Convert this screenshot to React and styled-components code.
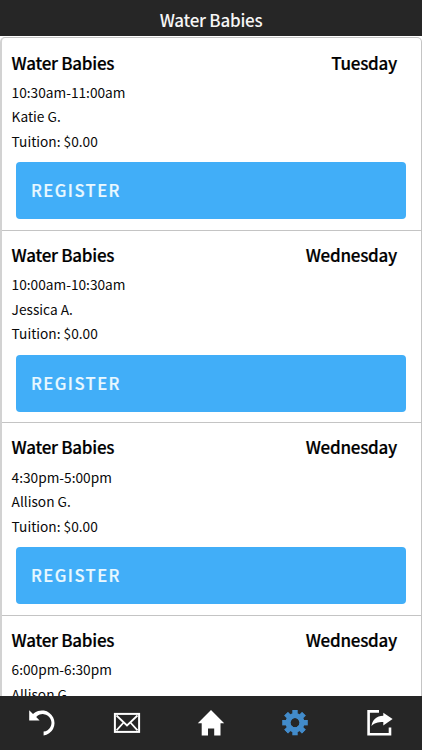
import React from "react";
import styled, { createGlobalStyle } from "styled-components";

const GlobalStyle = createGlobalStyle`
  *, *::before, *::after { box-sizing: border-box; }
  html, body { margin: 0; padding: 0; overflow: hidden; }
  body {
    background: #fff;
    color: #0a0a0a;
    font-family: "Noto Sans CJK SC", "Noto Sans", sans-serif;
  }
`;

const Screen = styled.div`
  width: 100%;
  height: 100vh;
  display: flex;
  flex-direction: column;
  overflow: hidden;
`;

const Header = styled.header`
  flex: 0 0 36px;
  background: #262626;
  display: flex;
  justify-content: center;
`;

const Title = styled.h1`
  margin: 0;
  padding-top: 4px;
  color: #f6f6f6;
  font-size: 17px;
  letter-spacing: -0.26px;
  line-height: 32px;
  font-weight: 500;
`;

const Content = styled.main`
  flex: 1 1 0;
  min-height: 0;
  padding-top: 1px;
  overflow: hidden;
`;

const ClassList = styled.ul`
  list-style: none;
  margin: 0;
  padding: 0.6px 0 0;
  border: 1px solid #c4c4c4;
  border-left-width: 2px;
  border-left-color: #d2d2d2;
  border-radius: 5px 5px 0 0;
`;

const ClassItem = styled.li`
  height: 192.45px;
  padding: 10.95px 15px 0 9.6px;
  border-bottom: 1px solid #c4c4c4;
`;

const ItemHeading = styled.div`
  display: flex;
  justify-content: space-between;
  padding-right: 9px;
  font-size: 17px;
  letter-spacing: -0.26px;
  line-height: 26px;
  font-weight: 500;
  -webkit-text-stroke: 0.2px currentColor;
  color: #000;
`;

const Details = styled.div`
  padding-top: 4.3px;
  font-size: 13.7px;
  line-height: 24.4px;
`;

const RegisterButton = styled.button`
  display: block;
  width: 390px;
  height: 57px;
  margin: 9.2px 0 0 4.4px;
  padding: 0 15px;
  border: 0;
  border-radius: 4px;
  background: #41aef8;
  color: #e9f8ff;
  font: 500 16.6px/56px "Noto Sans CJK SC", "Noto Sans", sans-serif;
  letter-spacing: 1.45px;
  -webkit-text-stroke: 0.2px currentColor;
  text-align: left;
`;

const ButtonLabel = styled.span`
  display: block;
  height: 57px;
`;

const TabBar = styled.nav`
  flex: 0 0 54px;
  background: #262626;
  display: grid;
  grid-template-columns: repeat(5, 1fr);
`;

const Tab = styled.button`
  border: 0;
  padding: 0;
  background: none;
  color: ${(p) => (p.$active ? "#428bca" : "#fff")};
  display: flex;
  align-items: center;
  justify-content: center;
`;

const Icon = styled.svg.attrs({ viewBox: "0 0 28 28", "aria-hidden": true })`
  width: 28px;
  height: 28px;
  display: block;
`;

const UndoIcon = () => (
  <Icon>
    <path d="M1.2 1.3V11.5H11.6L8.2 7.9A8.8 8.8 0 1 1 15.6 22.6V26.5A12.6 12.6 0 1 0 5 5.1Z" fill="currentColor" />
  </Icon>
);

const MailIcon = () => (
  <Icon fill="none" stroke="currentColor">
    <rect x="1.9" y="4.9" width="24.2" height="18" strokeWidth="2" />
    <path d="M3.5 6.5L14 16.5L24.5 6.5M3.5 21.3L10.6 13.5M24.5 21.3L17.4 13.5" strokeWidth="1.8" />
  </Icon>
);

const HomeIcon = () => (
  <Icon>
    <path d="M14 1L27.2 14.2H23.5V26.6H17.2V19.4H11V26.6H4.7V14.2H.8Z" fill="currentColor" />
  </Icon>
);

const GearIcon = () => (
  <Icon>
    <g transform="translate(14 13.7)" fill="currentColor">
      {[0, 45, 90, 135].map((angle) => (
        <rect key={angle} x="-2.7" y="-12.8" width="5.4" height="25.6" transform={`rotate(${angle})`} clipPath="url(#gear-ring)" />
      ))}
    </g>
    <clipPath id="gear-ring">
      <path clipRule="evenodd" d="M-13-13H13V13H-13ZM-4.6 0A4.6 4.6 0 0 0 4.6 0A4.6 4.6 0 0 0-4.6 0Z" />
    </clipPath>
    <circle cx="14" cy="13.7" r="7.1" fill="none" stroke="currentColor" strokeWidth="5" />
  </Icon>
);

const ShareIcon = () => (
  <Icon>
    <path d="M13 2.4H2.6V25.2H24V18.5" fill="none" stroke="currentColor" strokeWidth="2.6" />
    <path d="M17.3 3.8L26.6 9.9L17.3 16.5V13C11.8 13 7.8 14 5.5 17.2C6.1 11 10.5 7 17.3 6.8Z" fill="currentColor" />
  </Icon>
);

const classes = [
  { day: "Tuesday", time: "10:30am-11:00am", teacher: "Katie G." },
  { day: "Wednesday", time: "10:00am-10:30am", teacher: "Jessica A." },
  { day: "Wednesday", time: "4:30pm-5:00pm", teacher: "Allison G." },
  { day: "Wednesday", time: "6:00pm-6:30pm", teacher: "Allison G." },
];

const tabs = [
  { label: "Back", Glyph: UndoIcon },
  { label: "Messages", Glyph: MailIcon },
  { label: "Home", Glyph: HomeIcon },
  { label: "Settings", Glyph: GearIcon, active: true },
  { label: "Share", Glyph: ShareIcon },
];

export default function App() {
  return (
    <>
      <GlobalStyle />
      <Screen>
        <Header>
          <Title>Water Babies</Title>
        </Header>
        <Content>
          <ClassList>
            {classes.map((c) => (
              <ClassItem key={c.day + c.time}>
                <ItemHeading>
                  <span>Water Babies</span>
                  <span>{c.day}</span>
                </ItemHeading>
                <Details>
                  <div>{c.time}</div>
                  <div>{c.teacher}</div>
                  <div>Tuition: $0.00</div>
                </Details>
                <RegisterButton>
                  <ButtonLabel>REGISTER</ButtonLabel>
                </RegisterButton>
              </ClassItem>
            ))}
          </ClassList>
        </Content>
        <TabBar>
          {tabs.map(({ label, Glyph, active }) => (
            <Tab key={label} aria-label={label} $active={active}>
              <Glyph />
            </Tab>
          ))}
        </TabBar>
      </Screen>
    </>
  );
}
